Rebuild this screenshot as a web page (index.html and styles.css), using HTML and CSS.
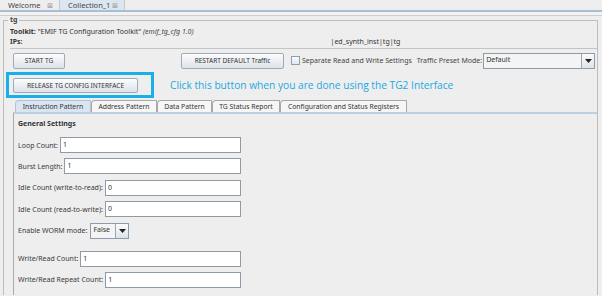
FILE: index.html
```html
<!DOCTYPE html>
<html>
<head>
<meta charset="utf-8">
<link rel="stylesheet" href="styles.css">
</head>
<body>
<div class="etabs">
  <div class="etab">Welcome<span class="x">&#x22A0;</span></div>
  <div class="etab active">Collection_1<span class="x">&#x22A0;</span></div>
</div>
<div class="esep"></div>
<fieldset class="group">
  <legend>tg</legend>
  <div class="info"><b>Toolkit:</b> "EMIF TG Configuration Toolkit" <i>(emif_tg_cfg 1.0)</i></div>
  <div class="info ips"><b>IPs:</b><span class="ipval">|ed_synth_inst|tg|tg</span></div>
  <div class="controls">
    <div class="btnrow">
      <button class="btn start">START TG</button>
      <button class="btn restart">RESTART DEFAULT Traffic</button>
      <span class="chk"><span class="box"></span>Separate Read and Write Settings</span>
      <span class="lbl">Traffic Preset Mode:</span>
      <div class="combo wide"><span class="val">Default</span><span class="arrow"><svg width="7" height="4" viewBox="0 0 7 4"><path d="M0 0H7L3.5 4Z" fill="#222"/></svg></span></div>
    </div>
    <div class="releaserow">
      <div class="highlight"><button class="btn release">RELEASE TG CONFIG INTERFACE</button></div>
      <span class="note">Click this button when you are done using the TG2 Interface</span>
    </div>
    <div class="ptabs">
      <div class="ptab sel t1">Instruction Pattern</div>
      <div class="ptab t2">Address Pattern</div>
      <div class="ptab t3">Data Pattern</div>
      <div class="ptab t4">TG Status Report</div>
      <div class="ptab t5">Configuration and Status Registers</div>
    </div>
    <div class="ppanel">
      <div class="heading">General Settings</div>
      <div class="frow"><span class="flbl">Loop Count:</span><span class="field">1</span></div>
      <div class="frow"><span class="flbl">Burst Length:</span><span class="field">1</span></div>
      <div class="frow"><span class="flbl">Idle Count (write-to-read):</span><span class="field">0</span></div>
      <div class="frow"><span class="flbl">Idle Count (read-to-write):</span><span class="field">0</span></div>
      <div class="frow worm"><span class="flbl">Enable WORM mode:</span><div class="combo small"><span class="val">False</span><span class="arrow"><svg width="7" height="4" viewBox="0 0 7 4"><path d="M0 0H7L3.5 4Z" fill="#222"/></svg></span></div></div>
      <div class="frow"><span class="flbl">Write/Read Count:</span><span class="field">1</span></div>
      <div class="frow"><span class="flbl">Write/Read Repeat Count:</span><span class="field">1</span></div>
    </div>
  </div>
</fieldset>
</body>
</html>
```

FILE: styles.css
```css
* { box-sizing: border-box; }
html, body { margin: 0; padding: 0; }
body {
  width: 602px;
  height: 296px;
  overflow: hidden;
  background: #eeeeee;
  font-family: "Noto Sans", "Open Sans", sans-serif;
  font-size: 7px;
  color: #3a3a3a;
}
.etabs {
  display: flex;
  height: 12px;
  border-bottom: 2px solid #a9bed2;
}
.etab {
  display: flex;
  align-items: center;
  height: 10px;
  padding: 0 0 0 8px;
  font-size: 7.5px;
  color: #444;
  border-right: 1px solid #c9c9c9;
}
.etab:first-child { width: 60px; }
.etab.active { width: 65px; background: #dce6f0; }
.etab .x { margin-left: auto; margin-right: 6px; font-size: 7px; color: #999; }
.esep {
  height: 4px;
  border-bottom: 1px solid #cfcfcf;
  background: #f2f2f2;
}
.group {
  margin: 0 4px 0 3px;
  padding: 0 0 0 2px;
  border: 1px solid #bdbdbd;
  border-bottom: none;
  height: 279px;
  min-width: 0;
  overflow: hidden;
}
.group legend {
  font-weight: bold;
  font-size: 7px;
  line-height: 8px;
  padding: 0 2px;
  margin-left: 2px;
  color: #444;
}
.info {
  line-height: 10px;
  padding-left: 4px;
  color: #333;
}
.info:first-of-type { margin-top: 3px; }
.info i { color: #444; }
.ips { display: flex; }
.ipval { margin-left: 308px; }
.controls {
  margin-top: 1px;
  margin-left: 4px;
  border-top: 1px solid #c4c4c4;
  padding-top: 3px;
}
.btn {
  font-family: "Noto Sans", sans-serif;
  font-size: 6.5px;
  color: #333;
  background: linear-gradient(#fbfcfd, #dde3ea);
  border: 1px solid #9eabb8;
  border-radius: 2px;
  padding: 0;
  height: 16px;
}
.btnrow {
  display: flex;
  align-items: center;
  height: 17px;
}
.start { width: 52px; margin-left: 3px; }
.restart { width: 103px; margin-left: 116px; }
.chk {
  display: flex;
  align-items: center;
  margin-left: 7px;
  color: #444;
}
.box {
  width: 9px;
  height: 9px;
  border: 1px solid #8e9fb0;
  background: linear-gradient(#fdfdfd, #e2e7ec);
  margin-right: 2px;
}
.lbl { margin-left: 5px; color: #444; }
.combo {
  display: flex;
  height: 16px;
  border: 1px solid #8d9cab;
  background: #f4f4f4;
}
.combo .val { flex: 1; padding-left: 2px; line-height: 12px; color: #333; }
.combo .arrow {
  width: 13px;
  border-left: 1px solid #9aa8b6;
  background: linear-gradient(#fbfcfd, #dde3ea);
  display: flex;
  align-items: center;
  justify-content: center;
}
.wide { width: 112px; margin-left: 1px; }
.releaserow {
  display: flex;
  align-items: center;
  margin-top: 3px;
  margin-left: -4px;
}
.highlight {
  width: 148px;
  height: 26px;
  border: 3px solid #1aafe8;
  padding: 3px 0 0 4px;
}
.release { width: 125px; height: 15px; display: block; }
.note {
  margin-left: 16px;
  font-family: "Open Sans", sans-serif;
  font-size: 10.2px;
  color: #1ba9e3;
}
.ptabs {
  display: flex;
  margin-top: 2px;
  margin-left: 5px;
  height: 12px;
}
.ptab {
  height: 12px;
  line-height: 11px;
  text-align: center;
  font-size: 6.8px;
  color: #333;
  background: #f6f6f6;
  border: 1px solid #a8a8a8;
  border-bottom: none;
  border-radius: 4px 1px 0 0;
}
.ptab.sel { background: #d9e5f1; border-color: #b3c3d3; }
.t1 { width: 76px; }
.t2 { width: 66px; }
.t3 { width: 55px; }
.t4 { width: 68px; }
.t5 { width: 127px; }
.ppanel {
  margin-left: 3px;
  border-top: 2px solid #bcd0e4;
  border-left: 1px solid #aaaaaa;
  padding: 5px 0 0 4px;
  height: 200px;
}
.heading { font-weight: bold; line-height: 10px; color: #333; margin-bottom: 8px; }
.frow {
  display: flex;
  align-items: center;
  width: 223px;
  height: 16px;
  margin-bottom: 5.4px;
}
.flbl { margin-right: 2px; color: #3a3a3a; flex: 0 0 auto; }
.field {
  flex: 1;
  height: 16px;
  background: #fff;
  border: 1px solid #8f9aa6;
  line-height: 14px;
  padding-left: 2px;
  color: #333;
}
.worm { margin-bottom: 12px; }
.small { width: 39px; margin-left: 1px; }
```
